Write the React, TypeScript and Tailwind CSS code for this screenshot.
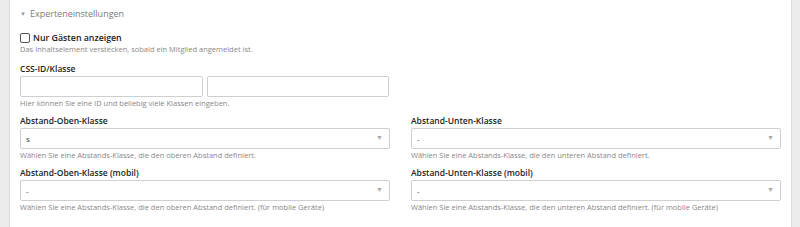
import React from 'react'

const font = { fontFamily: '"Open Sans", "Noto Sans", sans-serif' }

function Help({ children }: { children: React.ReactNode }) {
  return <p className="text-[7.5px] leading-[12px] text-[#888] whitespace-nowrap">{children}</p>
}

function Label({ children }: { children: React.ReactNode }) {
  return <p className="text-[8.5px] leading-[12px] font-semibold text-[#222]">{children}</p>
}

function Select({ value, label, help }: { value: string; label: string; help: string }) {
  return (
    <div>
      <Label>{label}</Label>
      <div className="mt-[1px] h-[21px] flex items-center justify-between border border-[#cfcfcf] rounded-[2px] bg-white pl-[5px] pr-[6px]">
        <span className="text-[8px] text-[#444]">{value}</span>
        <span className="text-[7px] text-[#aaa]">▼</span>
      </div>
      <Help>{help}</Help>
    </div>
  )
}

export default function App() {
  return (
    <div className="w-[800px] h-[227px] flex bg-white overflow-hidden" style={font}>
      <div className="w-[10px] bg-[#ebebeb] border-r border-[#dcdcdc]" />
      <div className="flex-1 px-[10px]">
        <div className="h-[28px] flex items-center gap-[4px] text-[#7a7a7a]">
          <span className="text-[6px] text-[#999]">▼</span>
          <span className="text-[9px]">Experteneinstellungen</span>
        </div>

        <label className="mt-[5px] h-[10px] flex items-center gap-[3px]">
          <span className="w-[10px] h-[10px] border border-[#555] rounded-[2px] bg-white" />
          <span className="text-[8.8px] leading-[10px] font-semibold text-[#222]">Nur Gästen anzeigen</span>
        </label>
        <Help>Das Inhaltselement verstecken, sobald ein Mitglied angemeldet ist.</Help>

        <div className="mt-[8px] w-[369px]">
          <Label>CSS-ID/Klasse</Label>
          <div className="mt-[1px] flex gap-[4px]">
            <div className="flex-1 h-[21px] border border-[#cfcfcf] rounded-[2px]" />
            <div className="flex-1 h-[21px] border border-[#cfcfcf] rounded-[2px]" />
          </div>
          <Help>Hier können Sie eine ID und beliebig viele Klassen eingeben.</Help>
        </div>

        <div className="mt-[6px] grid grid-cols-2 gap-x-[21px] gap-y-[6px]">
          <Select
            label="Abstand-Oben-Klasse"
            value="s"
            help="Wählen Sie eine Abstands-Klasse, die den oberen Abstand definiert."
          />
          <Select
            label="Abstand-Unten-Klasse"
            value="-"
            help="Wählen Sie eine Abstands-Klasse, die den unteren Abstand definiert."
          />
          <Select
            label="Abstand-Oben-Klasse (mobil)"
            value="-"
            help="Wählen Sie eine Abstands-Klasse, die den oberen Abstand definiert. (für mobile Geräte)"
          />
          <Select
            label="Abstand-Unten-Klasse (mobil)"
            value="-"
            help="Wählen Sie eine Abstands-Klasse, die den unteren Abstand definiert. (für mobile Geräte)"
          />
        </div>
      </div>
      <div className="w-[9px] bg-[#ebebeb] border-l border-[#dcdcdc]" />
    </div>
  )
}
